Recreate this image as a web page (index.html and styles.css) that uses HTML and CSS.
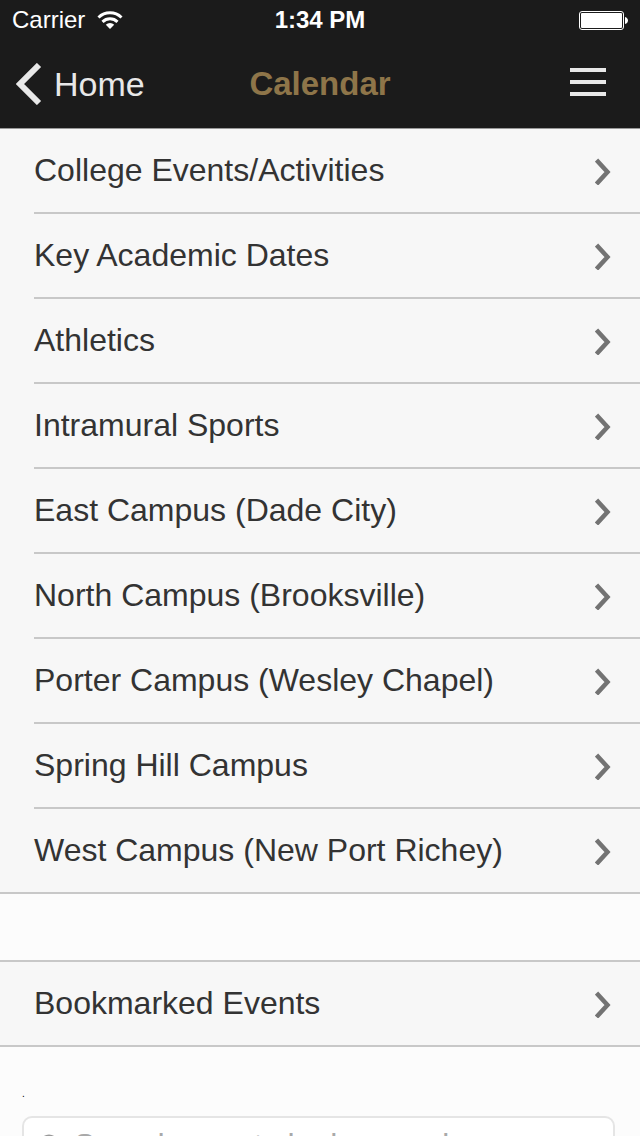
FILE: index.html
```html
<!DOCTYPE html>
<html lang="en">
<head>
    <meta charset="UTF-8">
    <meta name="viewport" content="width=device-width, initial-scale=1.0">
    <title>Calendar</title>
    <link rel="stylesheet" href="styles.css">
</head>
<body>
    <!-- Status bar -->
    <div class="status-bar">
        <div class="carrier">
            <span>Carrier</span>
            <svg class="wifi" viewBox="0 0 26 18" aria-hidden="true">
                <path d="M1.5 6.5a16.5 16.5 0 0 1 23 0M5.5 10.8a10.8 10.8 0 0 1 15 0" fill="none" stroke="#fff" stroke-width="3"/>
                <path d="M13 18l-4.2-4.2a6 6 0 0 1 8.4 0z" fill="#fff"/>
            </svg>
        </div>
        <div class="time">1:34 PM</div>
        <svg class="battery" viewBox="0 0 49 19" aria-hidden="true">
            <rect x="0.5" y="0.5" width="44" height="18" rx="2.5" fill="none" stroke="#fff"/>
            <rect x="2" y="2" width="41" height="15" rx="1" fill="#fff"/>
            <path d="M46 6c4 1 4 6 0 7z" fill="#fff"/>
        </svg>
    </div>

    <!-- Navigation -->
    <header class="nav-bar">
        <a class="back" href="#home">
            <svg viewBox="0 0 26 42" aria-hidden="true">
                <path d="M23 2L4 21l19 19" fill="none" stroke="#e8e8e8" stroke-width="6"/>
            </svg>
            Home
        </a>
        <h1>Calendar</h1>
        <button class="menu" type="button" aria-label="Menu">
            <svg viewBox="0 0 36 28" aria-hidden="true">
                <path d="M0 2h36M0 14h36M0 26h36" stroke="#e8e8e8" stroke-width="4"/>
            </svg>
        </button>
    </header>

    <svg class="symbols" aria-hidden="true">
        <symbol id="chevron" viewBox="0 0 16 28">
            <path d="M1.5 3L12.5 15l-11 12" fill="none" stroke="#737373" stroke-width="4.5"/>
        </symbol>
    </svg>

    <main>
        <ul class="list">
            <li><a href="#college">College Events/Activities <svg><use href="#chevron"/></svg></a></li>
            <li><a href="#academic">Key Academic Dates <svg><use href="#chevron"/></svg></a></li>
            <li><a href="#athletics">Athletics <svg><use href="#chevron"/></svg></a></li>
            <li><a href="#intramural">Intramural Sports <svg><use href="#chevron"/></svg></a></li>
            <li><a href="#east">East Campus (Dade City) <svg><use href="#chevron"/></svg></a></li>
            <li><a href="#north">North Campus (Brooksville) <svg><use href="#chevron"/></svg></a></li>
            <li><a href="#porter">Porter Campus (Wesley Chapel) <svg><use href="#chevron"/></svg></a></li>
            <li><a href="#spring-hill">Spring Hill Campus <svg><use href="#chevron"/></svg></a></li>
            <li><a href="#west">West Campus (New Port Richey) <svg><use href="#chevron"/></svg></a></li>
        </ul>

        <ul class="list bookmarks">
            <li><a href="#bookmarked">Bookmarked Events <svg><use href="#chevron"/></svg></a></li>
        </ul>

        <!-- Search -->
        <form class="search">
            <p>.</p>
            <label class="search-box">
                <svg viewBox="0 0 24 24" aria-hidden="true">
                    <circle cx="11" cy="11" r="8.5" fill="none" stroke="#999" stroke-width="2"/>
                    <path d="M17 17l6 6" stroke="#999" stroke-width="2"/>
                </svg>
                <input type="search" placeholder="Search events by keyword" aria-label="Search events by keyword">
            </label>
        </form>
    </main>
</body>
</html>
```

FILE: styles.css
```css
* {
    box-sizing: border-box;
}

body {
    display: flex;
    flex-direction: column;
    height: 100vh;
    margin: 0;
    overflow: hidden;
    background: #fcfcfc;
    color: #333;
    font-family: "Liberation Sans", Arial, sans-serif;
    font-size: 32px;
}

a {
    color: inherit;
    text-decoration: none;
}

svg {
    flex: none;
}

/* Status bar */
.status-bar {
    display: grid;
    grid-template-columns: 1fr auto 1fr;
    align-items: center;
    height: 40px;
    padding: 0 12px;
    background: #1b1b1b;
    color: #fff;
    font-size: 24px;
}

.carrier {
    display: flex;
    align-items: center;
    gap: 12px;
}

.wifi {
    width: 26px;
    height: 18px;
}

.time {
    font-weight: bold;
}

.battery {
    justify-self: end;
    width: 49px;
    height: 19px;
}

/* Navigation bar */
.nav-bar {
    display: grid;
    grid-template-columns: 1fr auto 1fr;
    align-items: center;
    height: 89px;
    padding: 0 16px;
    background: #1b1b1b;
    border-bottom: 1px solid #999;
    color: #e8e8e8;
    font-size: 34px;
}

.nav-bar h1 {
    margin: 0;
    color: #8e7549;
    font-size: 33px;
}

.back {
    display: flex;
    align-items: center;
    gap: 12px;
}

.back svg {
    width: 26px;
    height: 42px;
}

.menu {
    justify-self: end;
    padding: 0 18px 4px;
    border: 0;
    background: none;
    line-height: 0;
    cursor: pointer;
}

.menu svg {
    width: 36px;
    height: 28px;
}

.symbols {
    display: none;
}

/* Lists */
main {
    flex: 1;
    min-height: 0;
    overflow-y: auto;
    scrollbar-width: none;
}

.list {
    margin: 0;
    padding: 0;
    border-bottom: 2px solid #c8c8c8;
    background: #f7f7f7;
    list-style: none;
}

.list li {
    height: 85px;
    margin-left: 34px;
    border-bottom: 2px solid #c8c8c8;
}

.list li:last-child {
    height: 83px;
    border-bottom: 0;
}

.list a {
    display: flex;
    align-items: center;
    justify-content: space-between;
    height: 100%;
    padding-right: 29px;
}

.list svg {
    width: 16px;
    height: 28px;
}

.bookmarks {
    margin-top: 66px;
    border-top: 2px solid #c8c8c8;
}

/* Search */
.search {
    padding: 42px 25px 24px 22px;
}

.search p {
    margin: 0 0 17px;
    color: #000;
    font-size: 10px;
    line-height: 10px;
}

.search-box {
    display: flex;
    align-items: center;
    gap: 12px;
    height: 58px;
    padding: 0 14px;
    border: 2px solid #e5e5e5;
    border-radius: 10px;
    background: #fff;
}

.search-box svg {
    width: 24px;
    height: 24px;
}

.search-box input {
    flex: 1;
    min-width: 0;
    padding: 0;
    border: 0;
    outline: 0;
    background: none;
    color: #333;
    font: inherit;
}

.search-box input::placeholder {
    color: #a9a9a9;
}
```
